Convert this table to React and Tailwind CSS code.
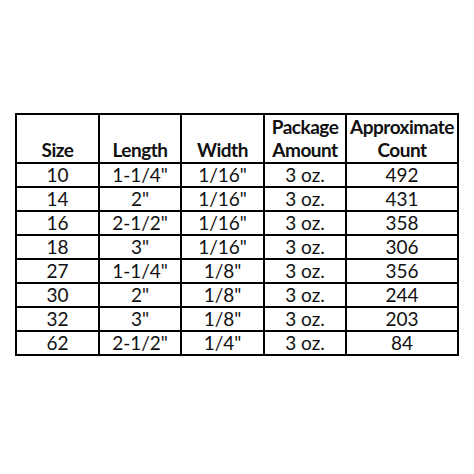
const rows = [
  ["10", '1-1/4"', '1/16"', "3 oz.", "492"],
  ["14", '2"', '1/16"', "3 oz.", "431"],
  ["16", '2-1/2"', '1/16"', "3 oz.", "358"],
  ["18", '3"', '1/16"', "3 oz.", "306"],
  ["27", '1-1/4"', '1/8"', "3 oz.", "356"],
  ["30", '2"', '1/8"', "3 oz.", "244"],
  ["32", '3"', '1/8"', "3 oz.", "203"],
  ["62", '2-1/2"', '1/4"', "3 oz.", "84"],
];

export default function App() {
  return (
    <div className="w-[474px] h-[474px] bg-white pt-[113px] pl-[15px] font-['Lato','Liberation_Sans',sans-serif] text-[#111]">
      <table className="border-collapse border-2 border-black w-[442px] table-fixed">
        <colgroup>
          <col className="w-[83px]" />
          <col className="w-[82px]" />
          <col className="w-[83px]" />
          <col className="w-[82px]" />
          <col className="w-[112px]" />
        </colgroup>
        <thead>
          <tr className="h-[48px] text-[19px] font-bold leading-[23px] tracking-[-0.5px]">
            <th className="border-2 border-black align-bottom pb-[1px]">Size</th>
            <th className="border-2 border-black align-bottom pb-[1px]">Length</th>
            <th className="border-2 border-black align-bottom pb-[1px]">Width</th>
            <th className="border-2 border-black align-bottom pb-[1px]">Package<br />Amount</th>
            <th className="border-2 border-black align-bottom pb-[1px]">Approximate<br />Count</th>
          </tr>
        </thead>
        <tbody>
          {rows.map((r, i) => (
            <tr key={i} className="h-[24px] text-[19px] leading-[20px]">
              {r.map((c, j) => (
                <td key={j} className="border-2 border-black text-center p-0">{c}</td>
              ))}
            </tr>
          ))}
        </tbody>
      </table>
    </div>
  );
}
